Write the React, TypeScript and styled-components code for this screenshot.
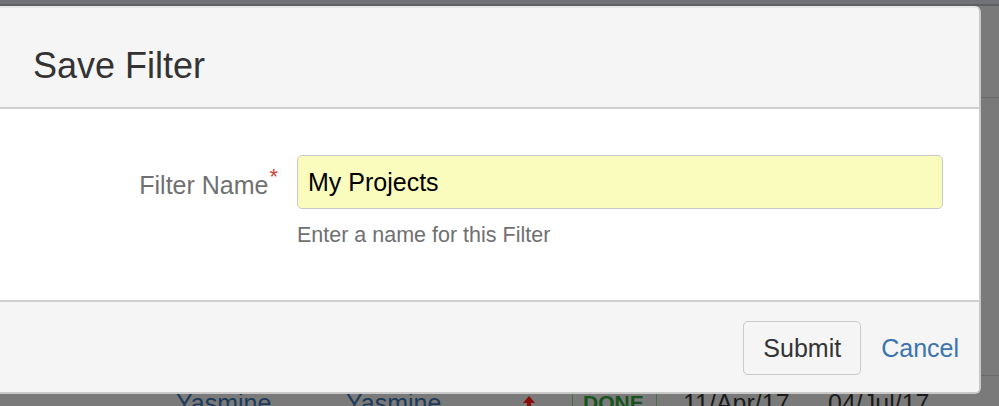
import React from 'react';
import styled, { createGlobalStyle } from 'styled-components';

const GlobalStyle = createGlobalStyle`
  html, body {
    margin: 0;
    padding: 0;
  }
  body {
    font-family: 'Liberation Sans', Arial, Helvetica, sans-serif;
    background: #7a7a7a;
  }
`;

const Page = styled.div`
  position: relative;
  width: 999px;
  height: 406px;
  overflow: hidden;
  background: #7a7a7a;
`;

const TopStrip = styled.div`
  height: 4px;
  background: #717277;
  border-bottom: 2px solid #5f6064;
`;

const BackRow = styled.div<{ height: number }>`
  height: ${(p) => p.height}px;
  border-bottom: 1px solid #6a6a6a;
  box-sizing: border-box;
`;

const DataRow = styled.div`
  display: flex;
  align-items: flex-start;
  padding-top: 10px;
  font-size: 25px;
  line-height: 34px;
  white-space: nowrap;
`;

const Cell = styled.span<{ width: number; color?: string }>`
  flex: 0 0 ${(p) => p.width}px;
  color: ${(p) => p.color || '#1b1b1b'};
`;

const Status = styled.span`
  flex: 0 0 111px;
  display: flex;
`;

const Lozenge = styled.span`
  border-left: 1px solid #4f6b4f;
  border-right: 1px solid #4f6b4f;
  padding: 0 12px 0 10px;
  color: #17531c;
  font-weight: bold;
  font-size: 21px;
`;

const Dialog = styled.div`
  position: absolute;
  top: 6px;
  left: -10px;
  width: 991px;
  box-sizing: border-box;
  border: 2px solid #c9c9c9;
  border-top-color: #e6e6e6;
  border-radius: 6px;
  overflow: hidden;
  background: #fff;
`;

const Header = styled.div`
  height: 101px;
  box-sizing: border-box;
  padding: 40px 0 0 41px;
  background: #f5f5f5;
  border-bottom: 2px solid #cfcfcf;
`;

const Title = styled.h2`
  margin: 0;
  font-size: 36px;
  line-height: 36px;
  font-weight: normal;
  color: #333;
`;

const Body = styled.div`
  height: 193px;
  box-sizing: border-box;
  padding: 46px 36px 0 0;
  border-bottom: 2px solid #cfcfcf;
`;

const Field = styled.div`
  display: grid;
  grid-template-columns: 286px 1fr;
  column-gap: 19px;
  align-items: center;
`;

const Label = styled.label`
  justify-self: end;
  font-size: 25px;
  color: #707070;
  white-space: nowrap;
`;

const Required = styled.span`
  color: #d04437;
  font-size: 22px;
  vertical-align: 10px;
  margin-left: 1px;
`;

const Input = styled.input`
  height: 54px;
  box-sizing: border-box;
  padding: 0 10px;
  border: 1px solid #c8c8c8;
  border-radius: 5px;
  background: #fafcbe;
  font-family: inherit;
  font-size: 25px;
  color: #000;
  outline: none;
  width: 100%;
`;

const Description = styled.div`
  grid-column: 2;
  margin-top: 11px;
  font-size: 21.5px;
  line-height: 30px;
  color: #707070;
`;

const Footer = styled.div`
  height: 90px;
  box-sizing: border-box;
  padding: 0 20px 0 0;
  background: #f5f5f5;
  display: flex;
  align-items: center;
  justify-content: flex-end;
  gap: 20px;
`;

const Button = styled.button`
  height: 54px;
  padding: 0 19px;
  border: 1px solid #cacaca;
  border-radius: 5px;
  background: #f5f5f5;
  font-family: inherit;
  font-size: 25px;
  color: #333;
  margin-top: 2px;
`;

const LinkButton = styled.a`
  font-size: 25px;
  color: #3b73af;
  text-decoration: none;
  margin-top: 2px;
`;

function UpArrow() {
  return (
    <svg width="14" height="18" viewBox="0 0 14 18" style={{ marginTop: 9 }}>
      <path d="M7 1 L1 8 H5 V18 H9 V8 H13 Z" fill="#8b0a0a" />
    </svg>
  );
}

export default function App() {
  return (
    <>
      <GlobalStyle />
      <Page>
        <TopStrip />
        <BackRow height={92} />
        <BackRow height={278} />
        <DataRow>
          <Cell width={176} />
          <Cell width={170} color="#1d3a5b">Yasmine</Cell>
          <Cell width={176} color="#1d3a5b">Yasmine</Cell>
          <Cell width={50}>
            <UpArrow />
          </Cell>
          <Status>
            <Lozenge>DONE</Lozenge>
          </Status>
          <Cell width={145}>11/Apr/17</Cell>
          <Cell width={150}>04/Jul/17</Cell>
        </DataRow>
        <Dialog>
          <Header>
            <Title>Save Filter</Title>
          </Header>
          <Body>
            <Field>
              <Label>
                Filter Name<Required>*</Required>
              </Label>
              <Input defaultValue="My Projects" />
              <Description>Enter a name for this Filter</Description>
            </Field>
          </Body>
          <Footer>
            <Button>Submit</Button>
            <LinkButton href="#">Cancel</LinkButton>
          </Footer>
        </Dialog>
      </Page>
    </>
  );
}
